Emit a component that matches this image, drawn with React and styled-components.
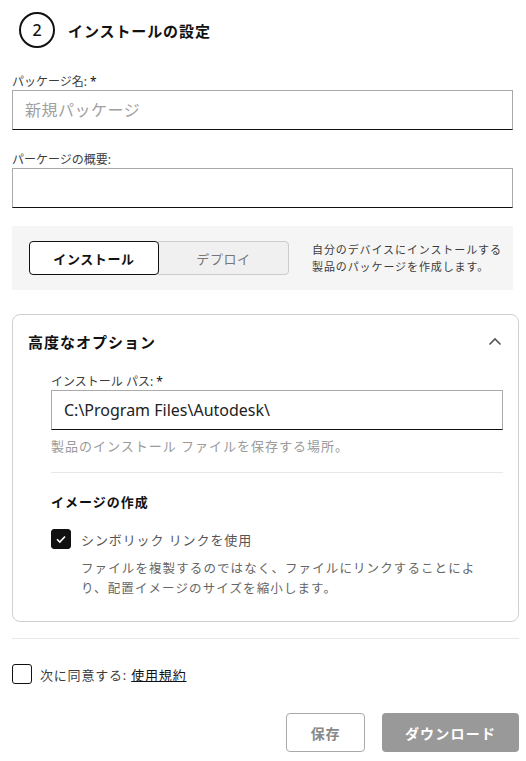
import React from 'react';
import styled, { createGlobalStyle } from 'styled-components';

const GlobalStyle = createGlobalStyle`
  body {
    margin: 0;
    background: #ffffff;
    font-family: "Noto Sans", "Noto Sans CJK JP", sans-serif;
    color: #3c3c3c;
  }
  * { box-sizing: border-box; }
`;

const App = () => {
  return (
    <>
      <GlobalStyle />
      <Page>
        <StepHeader>
          <StepNumber>2</StepNumber>
          <StepTitle>インストールの設定</StepTitle>
        </StepHeader>

        <Field>
          <Label>パッケージ名: <Req>*</Req></Label>
          <TextInput placeholder="新規パッケージ" />
        </Field>

        <Field>
          <Label>パーケージの概要:</Label>
          <TextInput />
        </Field>

        <ModePanel>
          <Segmented>
            <Segment $active>インストール</Segment>
            <Segment>デプロイ</Segment>
          </Segmented>
          <ModeHint>
            自分のデバイスにインストールする<br />
            製品のパッケージを作成します。
          </ModeHint>
        </ModePanel>

        <Card>
          <CardHeader>
            <CardTitle>高度なオプション</CardTitle>
            <svg width="16" height="16" viewBox="0 0 16 16" fill="none">
              <path d="M2.5 10.5 L8 5 L13.5 10.5" stroke="#555" strokeWidth="1.6" />
            </svg>
          </CardHeader>
          <CardBody>
            <Label>インストール パス: <Req>*</Req></Label>
            <TextInput defaultValue="C:\Program Files\Autodesk\" />
            <Helper>製品のインストール ファイルを保存する場所。</Helper>
            <InnerDivider />
            <SubTitle>イメージの作成</SubTitle>
            <CheckRow>
              <CheckBox $checked>
                <svg width="12" height="12" viewBox="0 0 12 12" fill="none">
                  <path d="M2 6.2 L4.8 9 L10 3.5" stroke="#fff" strokeWidth="1.6" />
                </svg>
              </CheckBox>
              <CheckText>シンボリック リンクを使用</CheckText>
            </CheckRow>
            <CheckDesc>
              ファイルを複製するのではなく、ファイルにリンクすることによ<br />
              り、配置イメージのサイズを縮小します。
            </CheckDesc>
          </CardBody>
        </Card>

        <Divider />

        <AgreeRow>
          <CheckBox />
          <AgreeText>次に同意する: <TermsLink href="#">使用規約</TermsLink></AgreeText>
        </AgreeRow>

        <Actions>
          <SecondaryButton>保存</SecondaryButton>
          <PrimaryButton>ダウンロード</PrimaryButton>
        </Actions>
      </Page>
    </>
  );
};

const Page = styled.div`
  width: 526px;
  padding: 12px 7px 8px 12px;
`;

const StepHeader = styled.div`
  display: flex;
  align-items: center;
  gap: 13px;
  padding-left: 7px;
  margin-bottom: 26px;
`;

const StepNumber = styled.div`
  width: 36px;
  height: 36px;
  border: 2px solid #111;
  border-radius: 50%;
  display: flex;
  align-items: center;
  justify-content: center;
  font-size: 16px;
  font-weight: 500;
  color: #111;
`;

const StepTitle = styled.h2`
  margin: 0;
  font-size: 15px;
  font-weight: 700;
  letter-spacing: 0.9px;
  color: #111;
`;

const Field = styled.div`
  margin-right: 6px;
  margin-bottom: 22px;
`;

const Label = styled.div`
  font-size: 12px;
  color: #3c3c3c;
  line-height: 15px;
  margin-bottom: 1px;
`;

const Req = styled.span`
  color: #111;
`;

const TextInput = styled.input`
  display: block;
  width: 100%;
  height: 40px;
  border: 1px solid #aaaaaa;
  border-bottom: 1px solid #111;
  padding: 0 12px;
  font-family: inherit;
  font-size: 16px;
  color: #222;
  outline: none;
  &::placeholder {
    color: #a0a0a0;
    letter-spacing: 0.5px;
  }
`;

const ModePanel = styled.div`
  display: flex;
  align-items: center;
  gap: 23px;
  background: #f5f5f5;
  margin-right: 6px;
  margin-top: -4px;
  height: 64px;
  padding: 0 10px 0 17px;
`;

const Segmented = styled.div`
  display: flex;
`;

const Segment = styled.div`
  width: ${({ $active }) => ($active ? '130px' : '131px')};
  height: 34px;
  display: flex;
  align-items: center;
  justify-content: center;
  font-size: 13px;
  letter-spacing: 0.6px;
  font-weight: ${({ $active }) => ($active ? 700 : 400)};
  color: ${({ $active }) => ($active ? '#111' : '#777')};
  background: ${({ $active }) => ($active ? '#fff' : '#f0f0f0')};
  border: 1px solid ${({ $active }) => ($active ? '#111' : '#cccccc')};
  border-radius: ${({ $active }) => ($active ? '4px' : '0 4px 4px 0')};
  ${({ $active }) => ($active ? 'position: relative; z-index: 1;' : 'margin-left: -1px;')}
`;

const ModeHint = styled.div`
  font-size: 11px;
  letter-spacing: 0.9px;
  line-height: 17px;
  color: #3c3c3c;
  white-space: nowrap;
`;

const Card = styled.div`
  margin-top: 24px;
  border: 1px solid #d0d0d0;
  border-radius: 8px;
  padding: 16px 15px 22px 15px;
`;

const CardHeader = styled.div`
  display: flex;
  align-items: center;
  justify-content: space-between;
  margin-bottom: 22px;
`;

const CardTitle = styled.h3`
  margin: 0;
  font-size: 15px;
  font-weight: 700;
  letter-spacing: 1px;
  color: #111;
`;

const CardBody = styled.div`
  padding: 0 0 0 23px;
`;

const Helper = styled.div`
  font-size: 13px;
  letter-spacing: 1px;
  color: #9a9a9a;
  margin-top: 6px;
`;

const InnerDivider = styled.div`
  height: 1px;
  background: #e8e8e8;
  margin: 17px 0 19px;
`;

const SubTitle = styled.div`
  font-size: 13px;
  font-weight: 700;
  letter-spacing: 1px;
  color: #111;
  margin-bottom: 18px;
`;

const CheckRow = styled.div`
  display: flex;
  align-items: center;
  gap: 10px;
`;

const CheckBox = styled.div`
  width: 20px;
  height: 20px;
  flex: none;
  border-radius: 3px;
  border: 1.5px solid #111;
  background: ${({ $checked }) => ($checked ? '#111' : '#fff')};
  display: flex;
  align-items: center;
  justify-content: center;
`;

const CheckText = styled.div`
  font-size: 13px;
  letter-spacing: 0.9px;
  color: #555;
`;

const CheckDesc = styled.div`
  margin: 10px 0 0 30px;
  font-size: 12.5px;
  letter-spacing: 1.1px;
  line-height: 20px;
  color: #666;
  white-space: nowrap;
`;

const Divider = styled.div`
  height: 1px;
  background: #e8e8e8;
  margin: 16px 0 25px;
`;

const AgreeRow = styled.div`
  display: flex;
  align-items: center;
  gap: 8px;
`;

const AgreeText = styled.div`
  font-size: 13px;
  letter-spacing: 0.8px;
  color: #3c3c3c;
`;

const TermsLink = styled.a`
  color: #111;
  text-decoration: underline;
`;

const Actions = styled.div`
  display: flex;
  justify-content: flex-end;
  gap: 17px;
  margin-top: 29px;
`;

const SecondaryButton = styled.button`
  width: 79px;
  height: 39px;
  border: 1px solid #aaaaaa;
  border-radius: 4px;
  background: #fff;
  color: #888;
  font-family: inherit;
  font-size: 14px;
  font-weight: 700;
  letter-spacing: 0.8px;
`;

const PrimaryButton = styled.button`
  width: 137px;
  height: 39px;
  border: none;
  border-radius: 4px;
  background: #999999;
  color: #fff;
  font-family: inherit;
  font-size: 14px;
  font-weight: 700;
  letter-spacing: 1.2px;
`;

export default App;
